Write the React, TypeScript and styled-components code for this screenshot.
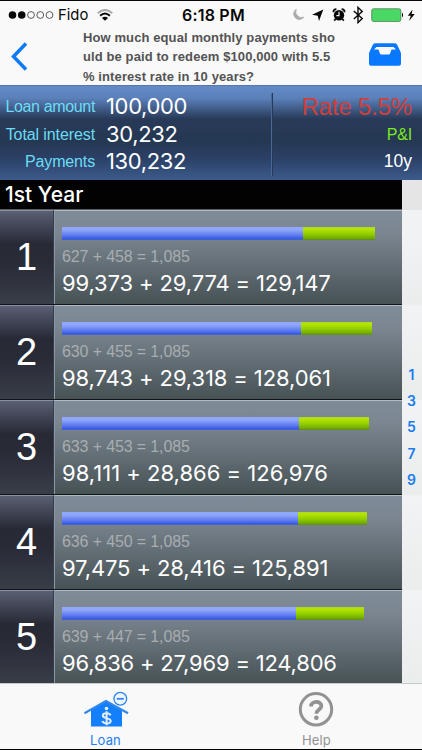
import React from "react";
import styled, { createGlobalStyle } from "styled-components";

const Global = createGlobalStyle`
  * { box-sizing: border-box; }
  body { margin: 0; background: #f9f9f9; }
`;

const SANS = `"Liberation Sans", Arial, sans-serif`;
const UI = `Inter, "Liberation Sans", sans-serif`;

const Screen = styled.div`
  width: 422px;
  height: 750px;
  display: flex;
  flex-direction: column;
  overflow: hidden;
  background: #f9f9f9;
  border-top: 1px solid #08040c;
  border-bottom: 1px solid #000;
  font-family: ${UI};
  white-space: nowrap;
`;

const StatusBar = styled.div`
  height: 27px;
  flex: none;
  display: grid;
  grid-template-columns: 174px 1fr auto;
  align-items: center;
  padding: 1px 6px 0 8px;
  color: #080808;
`;

const Carrier = styled.div`
  display: flex;
  align-items: center;
  font-size: 14.8px;
  line-height: 20px;
`;

const CarrierName = styled.span`
  margin: 0 9px 0 4px;
`;

const Clock = styled.div`
  font-size: 16px;
  font-weight: 600;
  line-height: 20px;
  letter-spacing: 0.2px;
`;

const StatusIcons = styled.div`
  display: flex;
  align-items: center;
`;

const NavBar = styled.header`
  height: 57px;
  flex: none;
  display: grid;
  grid-template-columns: 83px 1fr 53px;
`;

const BackButton = styled.button`
  border: 0;
  padding: 14px 0 0 9px;
  background: none;
  display: flex;
  align-items: flex-start;
`;

const InboxButton = styled(BackButton)`
  padding: 15px 0 0 0;
`;

const Question = styled.h1`
  margin: 0;
  font: bold 13px/19.3px ${SANS};
  letter-spacing: 0.1px;
  color: #535353;
`;

const QuestionLine = styled.div``;

const Summary = styled.section`
  height: 95px;
  flex: none;
  display: grid;
  grid-template-columns: 272px 1fr;
  padding-top: 7px;
  border-top: 1px solid #5477b0;
  background: linear-gradient(#648bc6 0, #5b80ba 12px, #283a58 33px, #253852 55px, #2b4167 73px, #3c5b8b 94px);
`;

const Totals = styled.div`
  display: grid;
  grid-template-columns: 95px 1fr;
  column-gap: 11px;
  grid-auto-rows: 27.6px;
  align-items: center;
  height: 83px;
  border-right: 1px solid #4a6895;
`;

const Label = styled.span<{ $ls: number }>`
  font: 16px/27px ${SANS};
  letter-spacing: ${(p) => p.$ls}px;
  color: #6bdcf5;
  text-align: right;
`;

const Amount = styled.span`
  font: 22px/27px ${UI};
  letter-spacing: -0.35px;
  color: #fff;
`;

const Terms = styled.div`
  display: grid;
  grid-auto-rows: 27.6px;
  align-items: center;
  justify-items: end;
  height: 83px;
  padding-right: 10px;
  border-left: 1px solid #233a5b;
`;

const Term = styled.span<{ $color: string; $size: number; $ls?: number }>`
  font: ${(p) => p.$size}px/27px ${SANS};
  letter-spacing: ${(p) => p.$ls ?? 0}px;
  color: ${(p) => p.$color};
`;

const ListArea = styled.main`
  height: 503px;
  flex: none;
  display: grid;
  grid-template-columns: 402px 20px;
`;

const YearHeader = styled.h2`
  margin: 0;
  height: 30px;
  padding-left: 5px;
  background: #020203;
  border-bottom: 1px solid #5b5b60;
  color: #fff;
  font: 500 21px/30px ${UI};
  letter-spacing: 0.02px;
`;

const Row = styled.article`
  height: 95px;
  display: grid;
  grid-template-columns: 54px 1fr;
  border-bottom: 1px solid #11151a;
  &:last-child { height: 93px; border-bottom: 0; }
`;

const Month = styled.div`
  border-top: 1px solid #8a90a0;
  border-right: 1px solid #343d49;
  background: linear-gradient(#5b6075 0, #4a4e60 10px, #272935 33px, #292b37 52px, #393e48 94px);
  color: #fff;
  text-align: center;
  font: 38px/93px ${SANS};
`;

const Detail = styled.div`
  padding: 16px 0 0 7px;
  border-top: 1px solid #b0bcc4;
  border-left: 1px solid #8797a4;
  background: linear-gradient(#808b99 0, #7b8691 22px, #465154 94px);
`;

const Bar = styled.div`
  display: flex;
  height: 13px;
`;

const Principal = styled.div`
  background: linear-gradient(#8da9fc 0, #90a6fb 3px, #5875ee 9px, #3257e5 12px, #536bb0 13px);
`;

const Interest = styled.div`
  background: linear-gradient(#a8d926 0, #b6e500 2px, #92cd00 7px, #6aa300 12px, #617f30 13px);
`;

const Monthly = styled.div`
  margin-top: 7px;
  font: 16px/20px ${SANS};
  letter-spacing: -0.13px;
  color: #a8adb0;
`;

const Running = styled.div<{ $ls: number }>`
  margin-top: 3px;
  font: 22px/27px ${UI};
  letter-spacing: ${(p) => p.$ls}px;
  color: #fff;
`;

const YearIndex = styled.nav`
  display: flex;
  flex-direction: column;
  align-items: center;
  padding: 182px 1px 0 0;
  background: linear-gradient(#e5e5e5 30px, #f1f2f4 30px, #f1f2f4 60px, #ebecec 124px, #f2f3f4 126px, #ebecec 219px, #f2f3f4 221px, #ebecec 314px, #f2f3f4 316px, #ebecec 409px, #f2f3f4 411px, #ebecec 503px);
  color: #197df0;
  font: 600 14px/26.2px ${UI};
`;

const TabBar = styled.footer`
  flex: 1;
  display: grid;
  grid-template-columns: 1fr 1fr;
  background: #f9f9f9;
  border-top: 1px solid #c4cbcc;
`;

const Tab = styled.button<{ $active?: boolean }>`
  border: 0;
  padding: 7px 0 0;
  background: none;
  display: flex;
  flex-direction: column;
  align-items: center;
  font: 13px/16px ${UI};
  letter-spacing: 0.15px;
  color: ${(p) => (p.$active ? "#257eed" : "#929292")};
`;

const TabLabel = styled.span`
  margin-top: 3px;
`;

const rows = [
  { p: 627, i: 458, bal: "99,373 + 29,774 = 129,147", blue: 241, green: 72, ls: -0.13 },
  { p: 630, i: 455, bal: "98,743 + 29,318 = 128,061", blue: 239, green: 71, ls: -0.12 },
  { p: 633, i: 453, bal: "98,111 + 28,866 = 126,976", blue: 237, green: 70, ls: 0.01 },
  { p: 636, i: 450, bal: "97,475 + 28,416 = 125,891", blue: 236, green: 69, ls: -0.12 },
  { p: 639, i: 447, bal: "96,836 + 27,969 = 124,806", blue: 234, green: 68, ls: -0.2 },
];

const SignalDots = () => (
  <svg width="46" height="10" viewBox="0 0 46 10">
    {[0, 1, 2, 3, 4].map((n) => (
      <circle key={n} cx={4.5 + n * 9.25} cy="5" r={n < 2 ? 3.8 : 3.4}
        fill={n < 2 ? "#080808" : "none"} stroke="#333" strokeWidth={n < 2 ? 0 : 0.8} />
    ))}
  </svg>
);

const Wifi = () => (
  <svg width="16" height="12" viewBox="0 0 16 12" fill="none" strokeWidth="1.9">
    <path d="M.8 4.2Q8-2.3 15.2 4.2" stroke="#aaa" />
    <path d="M3.1 6.7Q8 2.2 12.9 6.7" stroke="#080808" />
    <path d="M5 9Q8 6.4 11 9L8 11.8Z" fill="#080808" />
  </svg>
);

const StatusGlyphs = () => (
  <svg width="125" height="20" viewBox="0 0 125 20">
    <path d="M5.2 4.2A5.6 5.6 0 1 0 12.8 12.2A6 6 0 0 1 5.2 4.2Z" fill="#aaa" stroke="#aaa" strokeWidth=".8" />
    <path d="M32.3 4.4L28 16L26.8 10.7L21 9.7Z" fill="#080808" />
    <circle cx="48" cy="10.3" r="5.2" fill="#080808" />
    <path d="M42.4 7.2A3 3 0 0 1 45.4 4.2M50.6 4.2A3 3 0 0 1 53.6 7.2M44.6 14L43.2 15.6M51.4 14L52.8 15.6" stroke="#080808" strokeWidth="1.7" fill="none" />
    <path d="M48 6.8V10.6H45.4" stroke="#fff" strokeWidth="1.1" fill="none" />
    <path d="M62.8 6.1L71.2 13.6L67 17.7V2.3L71.2 6.4L62.8 13.9" stroke="#080808" strokeWidth="1.4" fill="none" />
    <rect x="80.7" y="3.7" width="29.2" height="12.8" rx="2" fill="#4bd765" stroke="#355f3d" strokeWidth=".6" />
    <path d="M111 7.5Q113.3 10 111 12.5Z" fill="#080808" />
    <path d="M121.5 4.5L116.8 10.8H119.8L118 16L123.8 9H120.6Z" fill="#080808" />
  </svg>
);

const House = () => (
  <svg width="48" height="38" viewBox="0 0 48 38">
    <path d="M9 18.5L24 10.5L40 18.5V35.5H9Z" fill="#147ffa" />
    <path d="M2.5 22.3L24 9.9L46 22.3" fill="none" stroke="#3287ed" strokeWidth="2.2" />
    <circle cx="38.3" cy="7.8" r="6.4" fill="#edf5fd" stroke="#2a84ee" strokeWidth="1.3" />
    <path d="M34.8 7.8H41.8" stroke="#2a84ee" strokeWidth="1.7" />
    <circle cx="24.5" cy="17.5" r="1.8" fill="#e4effb" />
    <path d="M28.6 24.3C27.3 21.5 21 21.5 20.8 24.5C20.7 28 28.7 26.2 28.7 30C28.6 33.3 21.5 33.3 20.3 30M24.6 20.2V34.3" fill="none" stroke="#e4effb" strokeWidth="2" />
  </svg>
);

const HelpIcon = () => (
  <svg width="38" height="38" viewBox="0 0 38 38" fill="none" stroke="#929292">
    <circle cx="18" cy="18.3" r="15.7" strokeWidth="3" />
    <path d="M13 15.5C13.2 9.4 23.5 9.5 23.3 15.3C23.1 18.7 18.4 18.6 18.4 22.8" strokeWidth="3.7" />
    <circle cx="18.4" cy="26.8" r="2.3" fill="#929292" stroke="none" />
  </svg>
);

export default function App() {
  return (
    <Screen>
      <Global />
      <StatusBar>
        <Carrier><SignalDots /><CarrierName>Fido</CarrierName><Wifi /></Carrier>
        <Clock>6:18 PM</Clock>
        <StatusIcons><StatusGlyphs /></StatusIcons>
      </StatusBar>
      <NavBar>
        <BackButton aria-label="Back">
          <svg width="20" height="30" viewBox="0 0 20 30"><path d="M17 1.5L4.5 14.5L17 27.5" fill="none" stroke="#0e7bf6" strokeWidth="3.5" /></svg>
        </BackButton>
        <Question>
          <QuestionLine>How much equal monthly payments sho</QuestionLine>
          <QuestionLine>uld be paid to redeem $100,000 with 5.5</QuestionLine>
          <QuestionLine>% interest rate in 10 years?</QuestionLine>
        </Question>
        <InboxButton aria-label="Inbox">
          <svg width="32" height="23" viewBox="0 0 32 23"><path fillRule="evenodd" fill="#0879ff" d="M6.5.2H25.5Q27.2.2 28 1.5L31.6 9Q32 9.8 32 10.8V20.8Q32 22.8 30 22.8H2Q0 22.8 0 20.8V10.8Q0 9.8.4 9L4 1.5Q4.8.2 6.5.2ZM7.5 4L5 6.5H8.5Q9.6 6.5 9.9 7.6L10.7 10Q11.1 11.5 12.3 11.5H19.7Q20.9 11.5 21.3 10L22.1 7.6Q22.4 6.5 23.5 6.5H27L24.5 4Z" /></svg>
        </InboxButton>
      </NavBar>
      <Summary>
        <Totals>
          <Label $ls={-0.35}>Loan amount</Label><Amount>100,000</Amount>
          <Label $ls={-0.1}>Total interest</Label><Amount>30,232</Amount>
          <Label $ls={-0.15}>Payments</Label><Amount>130,232</Amount>
        </Totals>
        <Terms>
          <Term $color="#cd403b" $size={24} $ls={-0.2}>Rate 5.5%</Term>
          <Term $color="#7dea20" $size={16} $ls={-0.2}>P&amp;I</Term>
          <Term $color="#fff" $size={17.5}>10y</Term>
        </Terms>
      </Summary>
      <ListArea>
        <div>
          <YearHeader>1st Year</YearHeader>
          {rows.map((r, n) => (
            <Row key={n}>
              <Month>{n + 1}</Month>
              <Detail>
                <Bar>
                  <Principal style={{ width: r.blue }} />
                  <Interest style={{ width: r.green }} />
                </Bar>
                <Monthly>{r.p} + {r.i} = 1,085</Monthly>
                <Running $ls={r.ls}>{r.bal}</Running>
              </Detail>
            </Row>
          ))}
        </div>
        <YearIndex>
          {[1, 3, 5, 7, 9].map((y) => <span key={y}>{y}</span>)}
        </YearIndex>
      </ListArea>
      <TabBar>
        <Tab $active><House /><TabLabel>Loan</TabLabel></Tab>
        <Tab><HelpIcon /><TabLabel>Help</TabLabel></Tab>
      </TabBar>
    </Screen>
  );
}
